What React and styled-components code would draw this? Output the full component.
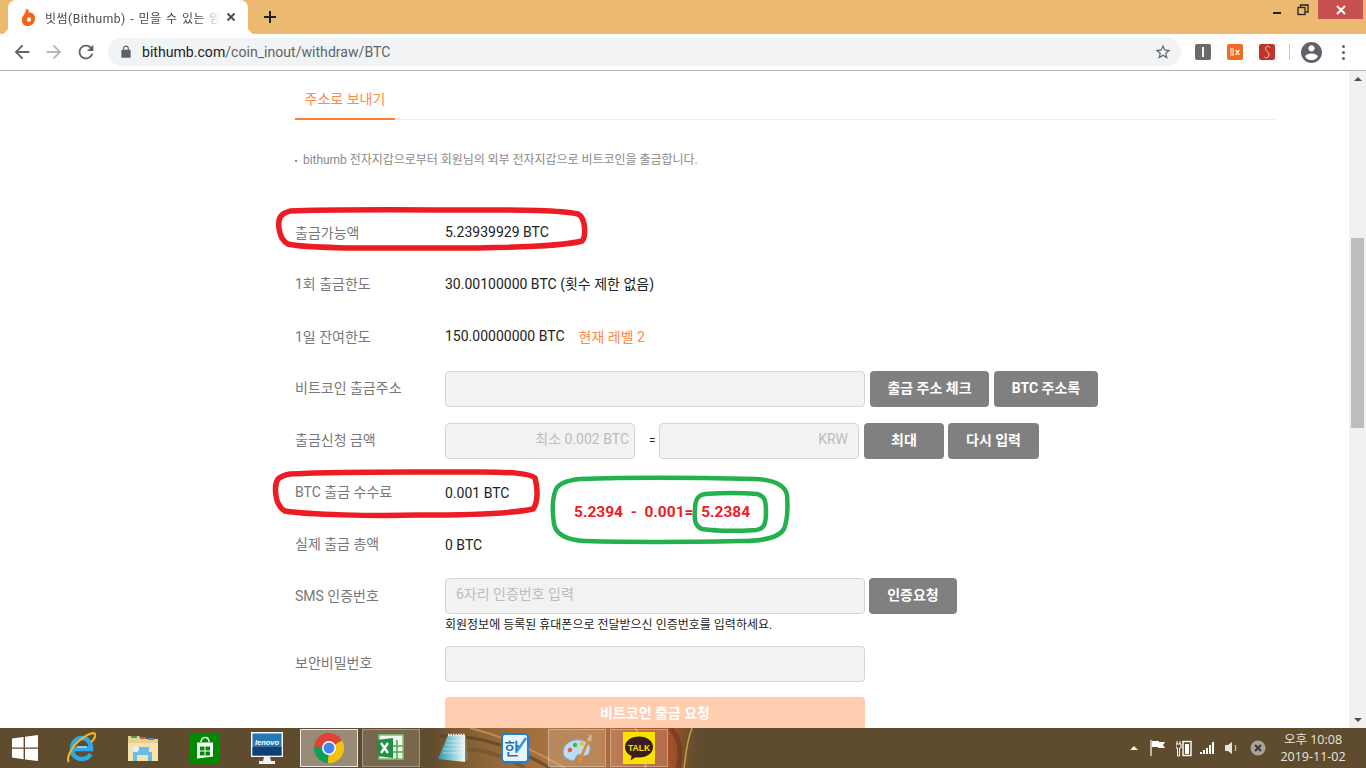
import React from 'react'
import styled, { createGlobalStyle } from 'styled-components'

const GlobalStyle = createGlobalStyle`
    html, body {
        margin: 0;
        padding: 0;
        height: 100%;
        overflow: hidden;
        background: #fff;
    }
    * {
        box-sizing: border-box;
    }
`

const FONT = `Roboto, "Noto Sans CJK KR", "Liberation Sans", sans-serif`

const Screen = styled.div`
    display: flex;
    flex-direction: column;
    width: 1366px;
    height: 768px;
    overflow: hidden;
    font-family: ${FONT};
`

/* browser chrome */
const TabStrip = styled.div`
    display: flex;
    align-items: flex-end;
    height: 34px;
    padding-left: 8px;
    background: #ebba70;
    flex-shrink: 0;
`

const Tab = styled.div`
    position: relative;
    display: flex;
    align-items: center;
    width: 240px;
    height: 34px;
    padding-left: 13px;
    background: #fff;
    border-radius: 8px 8px 0 0;

    &::before, &::after {
        content: '';
        position: absolute;
        bottom: 0;
        width: 8px;
        height: 8px;
    }
    &::before {
        left: -8px;
        background: radial-gradient(circle at 0 0, transparent 8px, #fff 8.5px);
    }
    &::after {
        right: -8px;
        background: radial-gradient(circle at 100% 0, transparent 8px, #fff 8.5px);
    }
`

const TabTitle = styled.span`
    width: 175px;
    margin-left: 9px;
    white-space: nowrap;
    font-size: 12px;
    letter-spacing: 0.5px;
    word-spacing: 1px;
    color: #4a4a4a;
    mask-image: linear-gradient(90deg, #000 88%, transparent 100%);
`

const TabClose = styled.svg`
    margin-left: 6px;
    width: 10px;
    height: 10px;
`

const NewTab = styled.svg`
    width: 14px;
    height: 14px;
    margin: 0 0 10px 15px;
`

const WindowControls = styled.div`
    display: flex;
    align-self: flex-start;
    margin-left: auto;
    margin-right: 3px;
`

const WindowButton = styled.div`
    display: flex;
    align-items: center;
    justify-content: center;
    width: ${p => p.$wide ? 45 : 27}px;
    height: 19px;
    background: ${p => p.$wide ? '#c75050' : 'transparent'};
    margin-left: ${p => p.$wide ? 2 : 0}px;
`

const Toolbar = styled.div`
    display: flex;
    align-items: center;
    height: 37px;
    padding-left: 11px;
    background: #fff;
    border-bottom: 1px solid #b6b6b6;
    flex-shrink: 0;
`

const NavIcon = styled.svg`
    width: 22px;
    height: 22px;
    margin-right: 10px;
    fill: ${p => p.$dim ? '#b4b6b8' : '#5f6368'};
`

const Omnibox = styled.div`
    display: flex;
    align-items: center;
    width: 1073px;
    height: 28px;
    margin-left: 1px;
    padding: 0 9px 0 11px;
    background: #f1f3f4;
    border-radius: 14px;
`

const Url = styled.div`
    margin-left: 9px;
    font-size: 14.1px;
    color: #5f6368;
    flex: 1;
`

const UrlHost = styled.span`
    color: #202124;
`

const Ext = styled.div`
    display: flex;
    align-items: center;
    justify-content: center;
    width: 16px;
    height: 16px;
    border-radius: 2px;
    background: ${p => p.$bg};
    color: #fff;
    font: bold 9px "Liberation Sans", sans-serif;
`

const ExtGroup = styled.div`
    display: flex;
    gap: 16px;
    margin-left: 14px;
`

const ToolbarDivider = styled.div`
    width: 1px;
    height: 16px;
    margin: 0 11px 0 14px;
    background: #c8c8c8;
`

const MenuDots = styled.div`
    display: flex;
    flex-direction: column;
    gap: 3px;
    margin-left: 20px;

    span {
        width: 3px;
        height: 3px;
        border-radius: 50%;
        background: #5f6368;
    }
`

/* page */
const Viewport = styled.div`
    position: relative;
    display: flex;
    flex: 1;
    min-height: 0;
    overflow: hidden;
`

const Page = styled.main`
    flex: 1;
    padding-left: 295px;
    overflow: hidden;
    background: #fff;
`

const Content = styled.div`
    width: 980px;
`

const Tabs = styled.div`
    display: flex;
    height: 49px;
    border-bottom: 1px solid #eeeeee;
`

const TabItem = styled.div`
    width: 100px;
    height: 49px;
    padding-top: 19px;
    text-align: center;
    font-size: 14px;
    line-height: 18px;
    color: #ff8a4c;
    border-bottom: 2px solid #ff7f32;
`

const Note = styled.p`
    position: relative;
    margin: 31px 0 45px;
    padding-left: 8px;
    font-size: 12px;
    line-height: 18px;
    letter-spacing: -0.04px;
    color: #8a8a8a;

    &::before {
        content: '';
        position: absolute;
        left: 0;
        top: 9px;
        width: 2px;
        height: 2px;
        background: #8a8a8a;
    }
`

const Row = styled.div`
    display: grid;
    grid-template-columns: 150px 1fr;
    align-items: center;
    min-height: 36px;
    margin-bottom: ${p => p.$gap ?? 16}px;
`

const Label = styled.div`
    padding-bottom: ${p => p.$lift ?? 4}px;
    font-size: 14px;
    color: #777;
`

const Value = styled.div`
    display: flex;
    align-items: center;
    gap: 14px;
    font-size: 14px;
    color: #222;
`

const Level = styled.span`
    color: #ff8a4c;
`

const Controls = styled.div`
    display: flex;
    align-items: center;
    gap: ${p => p.$gap ?? 5}px;
`

const Field = styled.input`
    width: ${p => p.$w ?? 420}px;
    height: 36px;
    padding: 0 ${p => p.$pad ?? 10}px 4px 10px;
    background: #f2f2f2;
    border: 1px solid #d6d6d6;
    border-radius: 4px;
    outline: none;
    font-family: ${FONT};
    font-size: 14px;
    text-align: ${p => p.$pad !== undefined ? 'right' : 'left'};

    &::placeholder {
        color: #bcbcbc;
        opacity: 1;
    }
`

const Equals = styled.span`
    width: 24px;
    padding-left: 14px;
    font-size: 12px;
    color: #222;
`

const GrayButton = styled.button`
    width: ${p => p.$w}px;
    height: 36px;
    margin-left: ${p => p.$ml ?? 0}px;
    padding: 0 0 4px;
    background: #808080;
    border: 0;
    border-radius: 4px;
    color: #fff;
    font-family: ${FONT};
    font-size: 14px;
    font-weight: 700;
`

const Hint = styled.div`
    margin: 4px 0 14px 150px;
    font-size: 12px;
    line-height: 14px;
    color: #222;
`

const Submit = styled.button`
    display: block;
    width: 420px;
    height: 36px;
    margin-left: 150px;
    padding: 0 0 6px;
    background: #ffcdb0;
    border: 0;
    border-radius: 4px;
    color: #fff;
    font-family: ${FONT};
    font-size: 14px;
    font-weight: 700;
`

/* hand drawn marks on top of the page */
const Marks = styled.svg`
    position: absolute;
    left: 0;
    top: 0;
    width: 1349px;
    height: 657px;
    pointer-events: none;
    fill: none;
`

const MarkText = styled.div`
    position: absolute;
    left: 574px;
    top: 431px;
    font-family: Roboto, "Liberation Sans", sans-serif;
    font-size: 15.5px;
    line-height: 20px;
    font-weight: 700;
    color: #ed1c24;
    white-space: pre;
`

const ScrollBar = styled.div`
    display: flex;
    flex-direction: column;
    align-items: center;
    width: 17px;
    background: #f1f1f1;
    flex-shrink: 0;
`

const ScrollArrow = styled.div`
    width: 0;
    height: 0;
    margin: ${p => p.$down ? 'auto 0 6px' : '6px 0 0'};
    border-left: 4px solid transparent;
    border-right: 4px solid transparent;
    border-bottom: ${p => p.$down ? '0' : '4px solid #505050'};
    border-top: ${p => p.$down ? '4px solid #505050' : '0'};
`

const ScrollThumb = styled.div`
    width: 13px;
    height: 190px;
    margin-top: 157px;
    background: #bdbdbd;
`

/* windows taskbar */
const Taskbar = styled.footer`
    position: relative;
    display: flex;
    align-items: center;
    height: 40px;
    background: linear-gradient(90deg, #5f4b2e 0, #5f4b2e 430px, #7a5a32 455px, #96693a 500px,
        #ab733f 555px, #ad6e3a 600px, #ad562c 635px, #a4522a 670px, #6a4f2d 690px, #5f4b2e 700px);
    flex-shrink: 0;
`

const Swirl = styled.svg`
    position: absolute;
    left: 430px;
    top: 0;
    width: 280px;
    height: 40px;
    fill: none;
`

const StartButton = styled.div`
    position: relative;
    display: flex;
    align-items: center;
    justify-content: center;
    width: 52px;
    height: 40px;
    padding-right: 2px;
`

const TaskItems = styled.div`
    position: relative;
    display: flex;
    gap: 4px;
`

const TaskButton = styled.div`
    display: flex;
    align-items: center;
    justify-content: center;
    width: 58px;
    height: 38px;
    border: 1px solid ${p => p.$state === 'active' ? 'rgba(255,255,255,.8)' : p.$state === 'open' ? 'rgba(255,255,255,.32)' : 'transparent'};
    background: ${p => p.$state === 'active' ? 'rgba(255,255,255,.36)' : p.$state === 'open' ? 'rgba(255,255,255,.16)' : 'transparent'};
`

const Tray = styled.div`
    position: relative;
    display: flex;
    align-items: center;
    margin-left: auto;
    height: 40px;
`

const TrayIcon = styled.svg`
    display: block;
    width: ${p => p.$w}px;
    height: 18px;
    margin-left: ${p => p.$gap}px;
`

const Clock = styled.div`
    width: 84px;
    margin: 0 11px 0 5px;
    text-align: center;
    font-size: 12.5px;
    line-height: 17px;
    color: #e9e5dc;
    font-family: "Open Sans", "Noto Sans CJK KR", sans-serif;
`

const RedMark = ({ d }) => <path d={d} stroke="#ed1c24" strokeWidth="5.5" strokeLinejoin="round" />
const GreenMark = ({ d }) => <path d={d} stroke="#22b14c" strokeWidth="4.5" strokeLinejoin="round" />

const WindowsLogo = () => (
    <svg width="26" height="26" viewBox="0 0 26 26" fill="#fff">
        <polygon points="0,3.6 11.6,2 11.6,12.4 0,12.4" />
        <polygon points="13,1.8 26,0 26,12.4 13,12.4" />
        <polygon points="0,13.8 11.6,13.8 11.6,24.2 0,22.6" />
        <polygon points="13,13.8 26,13.8 26,26 13,24.4" />
    </svg>
)

const IeIcon = () => (
    <svg width="30" height="32" viewBox="0 0 30 32" fill="none">
        <path d="M7 17h18c0-7-4-11-9-11-6 0-10 5-10 11 0 6 4 10 10 10 4 0 7-2 8.500-5" stroke="#2fa9e6" strokeWidth="4.500" />
        <path d="M11 15h10" stroke="#7fd3f5" strokeWidth="2" />
        <path d="M3 30C0 27 5 15 14 8 21 2 28 0 29 2c1 2-1 6-4 8" stroke="#f0b429" strokeWidth="2.200" />
    </svg>
)

const FolderIcon = () => (
    <svg width="32" height="30" viewBox="0 0 32 30">
        <path d="M1 3h11l2 3h17v22H1z" fill="#e7cf8e" />
        <rect x="4" y="3" width="6" height="2" fill="#3aa655" />
        <rect x="13" y="4" width="6" height="2" fill="#d9534f" />
        <rect x="21" y="5" width="6" height="2" fill="#3b8fd9" />
        <path d="M1 10h30v18H1z" fill="#f5e3ae" />
        <path d="M6 28v-9h4v-3h-2l2-2h12v5h3v9h-4v-6H10v6z" fill="#6db9e8" />
        <circle cx="9" cy="16" r="3" fill="#dff3fd" />
    </svg>
)

const StoreIcon = () => (
    <svg width="30" height="30" viewBox="0 0 30 30">
        <rect width="30" height="30" fill="#008a00" />
        <path d="M7 9.500h16v14l-16 2z" fill="#fff" />
        <path d="M11 9c0-6 8-6 8 0" fill="none" stroke="#fff" strokeWidth="1.400" />
        <path d="M10 13.500h4.500v4H10zM15.500 13.500H20v4h-4.500zM10 18.500h4.500v4H10zM15.500 18.500H20v4h-4.500z" fill="#008a00" />
    </svg>
)

const LenovoIcon = () => (
    <svg width="32" height="32" viewBox="0 0 32 32">
        <rect width="32" height="25" fill="#f4f6f8" />
        <rect x="1.500" y="1.500" width="29" height="22" fill="#2476b5" />
        <rect x="1.500" y="15" width="29" height="8.500" fill="#123f73" />
        <text x="16" y="13" textAnchor="middle" fontFamily="Liberation Sans" fontSize="7.500" fontWeight="700" fontStyle="italic" fill="#fff">lenovo</text>
        <path d="M13 25h6l1 4h4v3H8v-3h4z" fill="#f0f2f4" />
    </svg>
)

const ChromeIcon = () => (
    <svg width="30" height="30" viewBox="0 0 30 30">
        <path d="M15 15L.06 13.700A15 15 0 0 1 28 7.500Z" fill="#db4437" />
        <path d="M15 15L28 7.500A15 15 0 0 1 13.700 29.940Z" fill="#f4c20d" />
        <path d="M15 15L13.700 29.940A15 15 0 0 1 .06 13.700Z" fill="#0f9d58" />
        <circle cx="15" cy="15" r="7" fill="#fff" />
        <circle cx="15" cy="15" r="5.500" fill="#4285f4" />
    </svg>
)

const ExcelIcon = () => (
    <svg width="32" height="32" viewBox="0 0 32 32">
        <path d="M4 3h24v24H4z" fill="#eef7ea" stroke="#7cc576" strokeWidth="1.500" />
        <path d="M16 14h12M16 20h12M22 8v19" stroke="#4da64d" strokeWidth="1.500" />
        <path d="M2 8l16-2v20L2 24z" fill="#1f8f45" />
        <path d="M6 11l7 10M13 11l-7 10" stroke="#fff" strokeWidth="2.400" />
    </svg>
)

const NotepadIcon = () => (
    <svg width="30" height="30" viewBox="0 0 30 30">
        <defs>
            <linearGradient id="padFill" x1="0" x2="1" y1="0" y2="0">
                <stop offset="0" stopColor="#2f93a8" />
                <stop offset=".55" stopColor="#8fcfd8" />
                <stop offset="1" stopColor="#f2f7f8" />
            </linearGradient>
        </defs>
        <path d="M26 3h2l2 24-4 2z" fill="#8a7a58" />
        <path d="M10 2h17v27L0 26z" fill="url(#padFill)" />
        <path d="M10 2h17" stroke="#eef2f3" strokeWidth="2.500" strokeDasharray="1.500 1" />
        <path d="M9 8h16M7.500 12h18M6 16h19.500M4.500 20h21" stroke="#fff" strokeOpacity=".45" />
    </svg>
)

const HangulIcon = () => (
    <svg width="28" height="32" viewBox="0 0 28 32">
        <rect x="1" y="2" width="26" height="28" rx="3" fill="#eaf4fb" stroke="#1f7fd0" strokeWidth="2" />
        <text x="11" y="23" textAnchor="middle" fontFamily="Noto Sans CJK KR" fontSize="17" fontWeight="500" fill="#1f6fb8">한</text>
        <path d="M16 19L25 6" stroke="#2d9be0" strokeWidth="2.500" />
    </svg>
)

const PaintIcon = () => (
    <svg width="32" height="32" viewBox="0 0 32 32">
        <path d="M2 20c0-8 9-13 17-12 7 1 11 5 10 10-1 6-6 7-9 5-3-2-5 1-6 4-1 2-4 2-7 0-3-1-5-4-5-7z" fill="#bcdcf2" stroke="#7eaed0" />
        <circle cx="9" cy="18" r="2.200" fill="#e05a4a" />
        <circle cx="14" cy="13" r="2.200" fill="#4fb04a" />
        <circle cx="21" cy="12" r="2.200" fill="#e8c23a" />
        <path d="M18 30L28 7" stroke="#e58a2a" strokeWidth="3" />
        <path d="M26 8l3-6 2 2-1 6z" fill="#c9b998" />
    </svg>
)

const KakaoIcon = () => (
    <svg width="32" height="32" viewBox="0 0 32 32">
        <rect width="32" height="32" fill="#fae100" />
        <path d="M16 4.500c-8 0-14 4.500-14 10.500 0 4 2.600 7.200 6.600 9l-1.100 4.500 5-3.200c1.100.2 2.300.2 3.500.2 8 0 14-4.500 14-10.500S24 4.500 16 4.500z" fill="#3a1d1d" />
        <text x="16" y="18.500" textAnchor="middle" fontFamily="Liberation Sans" fontSize="8.500" fontWeight="700" fill="#fae100">TALK</text>
    </svg>
)

const FormRow = ({ label, gap, lift, children }) => (
    <Row $gap={gap}>
        <Label $lift={lift}>{label}</Label>
        {children}
    </Row>
)

export default function App() {
    return (
        <Screen>
            <GlobalStyle />
            <TabStrip>
                <Tab>
                    <svg width="15" height="17" viewBox="0 0 15 17">
                        <path d="M5 0c2 0 3 1 2.800 3.500C11 3 14.500 5.500 14 10c-.4 4.500-3.500 7-7.500 7C3 17 .5 14.500.8 10.500 1 7 5 4.500 5 0z" fill="#f0651c" />
                        <ellipse cx="8" cy="10.500" rx="2" ry="2.200" fill="#fff" />
                    </svg>
                    <TabTitle>빗썸(Bithumb) - 믿을 수 있는 암</TabTitle>
                    <TabClose viewBox="0 0 10 10">
                        <path d="M1.500 1.500l7 7M8.500 1.500l-7 7" stroke="#4a4a4a" strokeWidth="1.800" />
                    </TabClose>
                </Tab>
                <NewTab viewBox="0 0 14 14">
                    <path d="M7 1v12M1 7h12" stroke="#222" strokeWidth="2" />
                </NewTab>
                <WindowControls>
                    <WindowButton>
                        <svg width="10" height="10" viewBox="0 0 10 10"><rect x="2" y="7" width="8" height="2" fill="#222" /></svg>
                    </WindowButton>
                    <WindowButton>
                        <svg width="12" height="12" viewBox="0 0 12 12" fill="none" stroke="#222" strokeWidth="1.300">
                            <rect x="1" y="3.500" width="7" height="7" />
                            <path d="M3.500 3V1h7.500v7H8.500" />
                        </svg>
                    </WindowButton>
                    <WindowButton $wide>
                        <svg width="10" height="10" viewBox="0 0 10 10">
                            <path d="M1 1l8 8M9 1l-8 8" stroke="#fff" strokeWidth="2" />
                        </svg>
                    </WindowButton>
                </WindowControls>
            </TabStrip>

            <Toolbar>
                <NavIcon viewBox="0 0 24 24"><path d="M20 11H7.830l5.590-5.590L12 4l-8 8 8 8 1.410-1.410L7.830 13H20v-2z" /></NavIcon>
                <NavIcon viewBox="0 0 24 24" $dim><path d="M4 11h12.170l-5.590-5.590L12 4l8 8-8 8-1.410-1.410L16.170 13H4v-2z" /></NavIcon>
                <NavIcon viewBox="0 0 24 24"><path d="M17.650 6.350C16.200 4.900 14.210 4 12 4c-4.420 0-7.990 3.580-7.990 8s3.570 8 7.990 8c3.730 0 6.840-2.550 7.730-6h-2.080c-.82 2.330-3.040 4-5.650 4-3.310 0-6-2.690-6-6s2.690-6 6-6c1.660 0 3.140.69 4.220 1.780L13 11h7V4l-2.350 2.350z" /></NavIcon>
                <Omnibox>
                    <svg width="14" height="14" viewBox="0 0 24 24" fill="#5f6368">
                        <path d="M18 8h-1V6c0-2.760-2.240-5-5-5S7 3.240 7 6v2H6c-1.100 0-2 .9-2 2v10c0 1.100.9 2 2 2h12c1.100 0 2-.9 2-2V10c0-1.100-.9-2-2-2zM9 6c0-1.660 1.340-3 3-3s3 1.340 3 3v2H9V6z" />
                    </svg>
                    <Url><UrlHost>bithumb.com</UrlHost>/coin_inout/withdraw/BTC</Url>
                    <svg width="18" height="18" viewBox="0 0 24 24" fill="#5f6368">
                        <path d="M22 9.240l-7.190-.62L12 2 9.190 8.630 2 9.240l5.460 4.730L5.820 21 12 17.270 18.180 21l-1.630-7.030L22 9.240zM12 15.400l-3.760 2.270 1-4.280-3.320-2.880 4.380-.38L12 6.100l1.710 4.040 4.380.38-3.320 2.880 1 4.280L12 15.400z" />
                    </svg>
                </Omnibox>
                <ExtGroup>
                    <Ext $bg="#6a6a6a"><svg width="4" height="10" viewBox="0 0 4 10"><rect x="1" width="2" height="10" fill="#f2f2f2" /></svg></Ext>
                    <Ext $bg="#f26b21">
                        <svg width="5" height="8" viewBox="0 0 5 8"><rect width="4" height="8" fill="#f9b48c" /></svg>x
                    </Ext>
                    <Ext $bg="#c1332b">
                        <svg width="8" height="14" viewBox="0 0 8 14" fill="none">
                            <path d="M6.500 3C6 .5 2.500.5 2.500 3.500c0 3 4 3.500 3.500 6.500S3 13.500 1.500 12" stroke="#f6d0c8" strokeWidth="1" />
                        </svg>
                    </Ext>
                </ExtGroup>
                <ToolbarDivider />
                <svg width="21" height="21" viewBox="2 2 20 20" fill="#5f6368">
                    <path d="M12 2C6.480 2 2 6.480 2 12s4.480 10 10 10 10-4.480 10-10S17.520 2 12 2zm0 3c1.660 0 3 1.340 3 3s-1.340 3-3 3-3-1.340-3-3 1.340-3 3-3zm0 14.200c-2.500 0-4.710-1.280-6-3.220.03-1.990 4-3.080 6-3.080 1.990 0 5.970 1.090 6 3.080-1.290 1.940-3.500 3.220-6 3.220z" />
                </svg>
                <MenuDots><span /><span /><span /></MenuDots>
            </Toolbar>

            <Viewport>
                <Page>
                    <Content>
                        <Tabs><TabItem>주소로 보내기</TabItem></Tabs>
                        <Note>bithumb 전자지갑으로부터 회원님의 외부 전자지갑으로 비트코인을 출금합니다.</Note>
                        <FormRow label="출금가능액" gap={15} lift={1}>
                            <Value>5.23939929 BTC</Value>
                        </FormRow>
                        <FormRow label="1회 출금한도" gap={17} lift={1}>
                            <Value>30.00100000 BTC (횟수 제한 없음)</Value>
                        </FormRow>
                        <FormRow label="1일 잔여한도" gap={17} lift={1}>
                            <Value>150.00000000 BTC <Level>현재 레벨 2</Level></Value>
                        </FormRow>
                        <FormRow label="비트코인 출금주소">
                            <Controls>
                                <Field readOnly />
                                <GrayButton $w={119}>출금 주소 체크</GrayButton>
                                <GrayButton $w={104}>BTC 주소록</GrayButton>
                            </Controls>
                        </FormRow>
                        <FormRow label="출금신청 금액">
                            <Controls $gap={0}>
                                <Field readOnly $w={190} $pad={5} placeholder="최소 0.002 BTC" />
                                <Equals>=</Equals>
                                <Field readOnly $w={200} $pad={10} placeholder="KRW" />
                                <GrayButton $w={80} $ml={5}>최대</GrayButton>
                                <GrayButton $w={91} $ml={4}>다시 입력</GrayButton>
                            </Controls>
                        </FormRow>
                        <FormRow label="BTC 출금 수수료">
                            <Value>0.001 BTC</Value>
                        </FormRow>
                        <FormRow label="실제 출금 총액" gap={15}>
                            <Value>0 BTC</Value>
                        </FormRow>
                        <FormRow label="SMS 인증번호" gap={0} lift={3}>
                            <Controls $gap={4}>
                                <Field readOnly placeholder="6자리 인증번호 입력" />
                                <GrayButton $w={88}>인증요청</GrayButton>
                            </Controls>
                        </FormRow>
                        <Hint>회원정보에 등록된 휴대폰으로 전달받으신 인증번호를 입력하세요.</Hint>
                        <FormRow label="보안비밀번호" gap={15}>
                            <Controls>
                                <Field readOnly />
                            </Controls>
                        </FormRow>
                        <Submit>비트코인 출금 요청</Submit>
                    </Content>
                </Page>
                <ScrollBar>
                    <ScrollArrow />
                    <ScrollThumb />
                    <ScrollArrow $down />
                </ScrollBar>

                <Marks viewBox="0 0 1349 657">
                    <RedMark d="M290 140C330 138 420 139 480 139C520 139 560 139 578 143C586 147 586 166 582 170C560 176 500 177 440 177C380 177 310 178 288 173C278 168 277 150 281 145C283 142 287 141 290 140Z" />
                    <RedMark d="M290 403C330 400 420 401 480 401C510 401 530 402 535 407C538 418 538 432 533 438C510 443 470 444 420 444C370 445 310 444 285 440C274 434 274 414 278 408C281 405 285 404 290 403Z" />
                    <GreenMark d="M580 408C640 406 710 407 755 408C775 409 785 414 787 424C788 436 787 450 784 458C778 468 760 470 740 470C690 471 620 471 585 470C565 469 556 463 554 453C552 440 552 428 556 418C560 411 570 409 580 408Z" />
                    <GreenMark d="M705 423C720 422 745 422 757 423C765 425 766 430 766 441C766 453 764 458 756 459C740 460 715 460 702 458C695 455 694 449 695 438C695 428 698 424 705 423Z" />
                </Marks>
                <MarkText>{'5.2394  -  0.001=  5.2384'}</MarkText>
            </Viewport>

            <Taskbar>
                <Swirl viewBox="0 0 280 40">
                    <path d="M10 8C50 6 90 22 120 40" stroke="#4f3f26" strokeWidth="3" opacity=".65" />
                    <path d="M40 0C80 10 110 26 135 40" stroke="#d09a58" strokeWidth="2" opacity=".7" />
                    <path d="M20 22C50 18 75 28 95 40" stroke="#6a4f2d" strokeWidth="4" opacity=".6" />
                    <path d="M205 0C215 15 218 30 215 40" stroke="#d9a050" strokeWidth="2" opacity=".7" />
                    <path d="M240 0C250 10 252 25 248 40" stroke="#7a2e18" strokeWidth="5" opacity=".6" />
                    <path d="M262 0C257 12 256 26 254 40" stroke="#c4a04a" strokeWidth="1.500" />
                </Swirl>
                <StartButton><WindowsLogo /></StartButton>
                <TaskItems>
                    <TaskButton><IeIcon /></TaskButton>
                    <TaskButton><FolderIcon /></TaskButton>
                    <TaskButton><StoreIcon /></TaskButton>
                    <TaskButton><LenovoIcon /></TaskButton>
                    <TaskButton $state="active"><ChromeIcon /></TaskButton>
                    <TaskButton $state="open"><ExcelIcon /></TaskButton>
                    <TaskButton><NotepadIcon /></TaskButton>
                    <TaskButton><HangulIcon /></TaskButton>
                    <TaskButton $state="open"><PaintIcon /></TaskButton>
                    <TaskButton $state="open"><KakaoIcon /></TaskButton>
                </TaskItems>
                <Tray>
                    <TrayIcon $w={8} $gap={0} viewBox="0 0 8 18"><path d="M0 11l4-4 4 4z" fill="#f4f1ea" /></TrayIcon>
                    <TrayIcon $w={16} $gap={12} viewBox="0 0 16 18" fill="none">
                        <path d="M1 1v16" stroke="#fff" strokeWidth="1.200" />
                        <path d="M2 2h7v1h6l-2 3 2 3H8V8H2z" fill="#fff" />
                    </TrayIcon>
                    <TrayIcon $w={16} $gap={10} viewBox="0 0 16 18" fill="none">
                        <path d="M1 2v3M4 2v3M0 5h5v4H3.500v8H1.500V9H0z" stroke="#fff" strokeWidth="1" />
                        <rect x="7" y="2.500" width="8" height="14" stroke="#fff" strokeWidth="1.400" />
                        <rect x="9" y="5" width="4" height="10" fill="#fff" />
                    </TrayIcon>
                    <TrayIcon $w={15} $gap={8} viewBox="0 0 15 18" fill="#fff">
                        <path d="M0 13h2v2H0zM3 11h2v4H3zM6 9h2v6H6zM9 6h2v9H9zM12 3h2v12h-2z" />
                    </TrayIcon>
                    <TrayIcon $w={12} $gap={10} viewBox="0 0 12 18" fill="none">
                        <path d="M0 6h3l4-3v12l-4-3H0z" fill="#e9e5dc" />
                        <path d="M10 6c1 2 1 4 0 6" stroke="#e9e5dc" />
                    </TrayIcon>
                    <TrayIcon $w={16} $gap={13} viewBox="0 0 16 18">
                        <circle cx="8" cy="9" r="7.500" fill="#a8a49a" />
                        <path d="M5 6l6 6M11 6l-6 6" stroke="#3c3a34" strokeWidth="2" />
                    </TrayIcon>
                    <Clock>오후 10:08<br />2019-11-02</Clock>
                </Tray>
            </Taskbar>
        </Screen>
    )
}
